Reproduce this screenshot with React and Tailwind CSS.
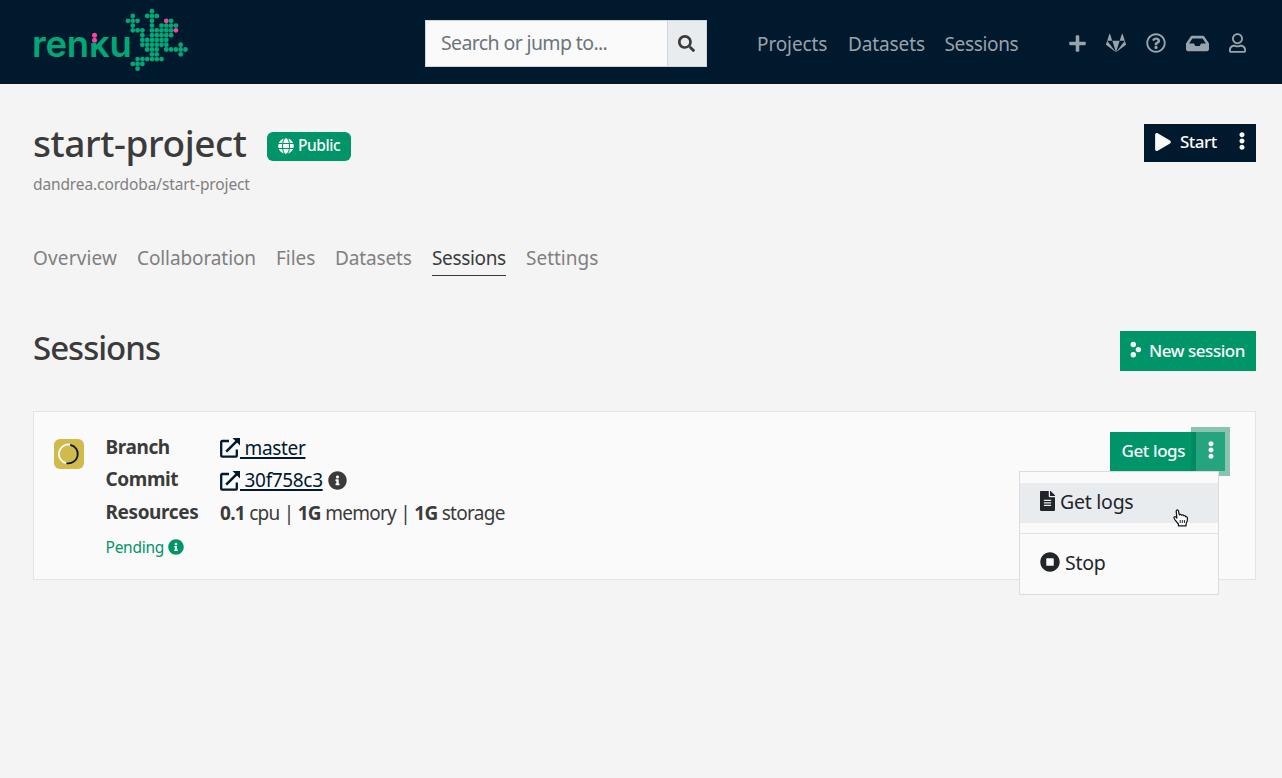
import React from "react";
import {
  FaPlus, FaGitlab, FaRegQuestionCircle, FaInbox, FaRegUser, FaSearch, FaGlobe,
  FaPlay, FaEllipsisV, FaInfoCircle, FaFileAlt, FaStopCircle,
} from "react-icons/fa";

const GECKO = [
  [5], [1, 4, 5, 6], [0, 1, 2, 5, 8, 9], [1, 5, 7, 8, 9, 10], [1, 2, 3, 5, 6, 7, 8, 9, 10],
  [3, 5, 6, 7, 8, 9], [3, 4, 5, 6, 7, 8], [3, 4, 5, 6, 7, 8, 11], [4, 5, 6, 8, 9, 10, 11, 12],
  [5, 6, 11], [2, 3, 4, 5, 6, 7], [1, 2, 3], [2],
];
const isEye = (r, c) => (r === 2 && c === 8) || (r === 4 && c === 10);

function Logo() {
  return (
    <div className="relative h-[84px] w-[157px] shrink-0">
      <div className="absolute left-[-2px] top-[22px] flex whitespace-nowrap font-['Inter',sans-serif] text-[36.5px] font-semibold leading-[44px] tracking-[-0.2px] text-[#00a878]">
        <span className="ml-px">ren</span>
        <span className="[clip-path:polygon(0_21px,9px_21px,9px_15px,100%_15px,100%_100%,0_100%)]">k</span>
        <span>u</span>
      </div>
      <svg className="absolute left-0 top-0" width="157" height="84">
        <circle cx="61.5" cy="35.2" r="2.5" fill="#f04a9c" />
        <circle cx="61.5" cy="40.2" r="2.5" fill="#f04a9c" />
        {GECKO.map((cols, r) =>
          cols.map((c) => (
            <circle key={`${r}-${c}`} cx={95 + c * 4.79} cy={11.2 + r * 4.79} r="2.4" fill={isEye(r, c) ? "#f04a9c" : "#00a878"} />
          ))
        )}
      </svg>
    </div>
  );
}

function ExternalLink() {
  return (
    <svg className="shrink-0" width="20" height="20" viewBox="0 0 20 20" fill="none" stroke="#01192d" strokeWidth="2.3">
      <path d="M9 3H2.2Q1.2 3 1.2 4v13.7q0 1 1 1h13.6q1 0 1-1V11.5" />
      <path d="M6.2 13.6 17 2.8" strokeWidth="2.6" />
      <path d="M12.5 0H20v7.5Z" fill="#01192d" stroke="none" />
    </svg>
  );
}

function Row({ label, children, className }) {
  return (
    <div className={`flex items-center ${className}`}>
      <div className="-mt-[2px] w-[114.5px] shrink-0 text-[19px] font-bold tracking-[-0.4px]">{label}</div>
      {children}
    </div>
  );
}

const TABS = [
  ["Overview", "w-[84px] tracking-[0.15px]"], ["Collaboration", "w-[119px] tracking-[-0.1px]"], ["Files", "w-[39px] tracking-[-0.05px]"],
  ["Datasets", "w-[77px] tracking-[-0.15px]"], ["Sessions", "w-[74px] tracking-[-0.35px]"], ["Settings", "w-[73px]"],
];

export default function App() {
  return (
    <div className="h-[778px] w-[1282px] overflow-hidden bg-[#f4f4f4] font-['Noto_Sans',sans-serif] text-[#3b3b3b]">
      <header className="flex h-[84px] items-center bg-[#01192d] pl-[33px] text-[#99a3ab]">
        <Logo />
        <div className="ml-[235px] mt-[3px] flex h-[47px] w-[282px] border border-[#ced4da] bg-[#fafafa]">
          <div className="flex-1 pl-[15px] text-[19.5px] leading-[44px] tracking-[-0.62px] text-[#6c757d]">Search or jump to...</div>
          <div className="flex w-[39px] items-center justify-center border-l border-[#ced4da] bg-[#e9ecef] pr-px text-[#3b3b3b]"><FaSearch size={17} /></div>
        </div>
        <nav className="ml-[50px] mt-[5px] flex whitespace-nowrap text-[19px] tracking-[-0.12px]">
          <span className="w-[91px]">Projects</span>
          <span className="w-[96.5px]">Datasets</span>
          <span className="w-[123.5px] tracking-[-0.35px]">Sessions</span>
        </nav>
        <div className="mt-[2px] flex items-center">
          <FaPlus size={19} className="mr-[19px]" />
          <FaGitlab size={20} className="mr-[20px]" />
          <FaRegQuestionCircle size={20} className="mr-[20px]" />
          <FaInbox size={23} className="mr-[20px]" />
          <FaRegUser size={20} className="w-[17px]" />
        </div>
      </header>

      <main className="pl-[33px] pr-[26px]">
        <div className="flex h-[89px] justify-between pt-[40px]">
          <div className="flex h-[40px]">
            <h1 className="w-[234px] whitespace-nowrap text-[37px] font-medium leading-[38px] tracking-[-0.42px]">start-project</h1>
            <div className="mt-[8px] flex h-[29px] w-[84px] items-center rounded-md bg-[#009568] pl-[11px] text-[15.5px] font-medium text-[#fafafa]">
              <FaGlobe size={16} className="mr-[4px] -mt-px" />
              <span className="-mt-[2px] tracking-[-0.45px]">Public</span>
            </div>
          </div>
          <div className="flex h-[38px] w-[112px] items-center bg-[#01192d] pl-[10px] text-[#fafafa]">
            <FaPlay size={18} className="mr-[8px] -mt-[3px]" />
            <span className="-mt-[2px] w-[53px] text-[17px] font-medium tracking-[-0.5px]">Start</span>
            <FaEllipsisV size={18} className="-mt-1" />
          </div>
        </div>
        <div className="h-[73px] text-[15.5px] leading-[23px] tracking-[-0.12px] text-[#808080]">dandrea.cordoba/start-project</div>

        <nav className="flex h-[30px] gap-5 whitespace-nowrap text-[19px] leading-[24px] text-[#808080]">
          {TABS.map(([t, w]) => (
            <div key={t} className={`${w} ${t === "Sessions" ? "border-b border-[#3b3b3b] text-[#3b3b3b]" : ""}`}>{t}</div>
          ))}
        </nav>

        <div className="mt-[55px] flex h-[80px] justify-between">
          <h2 className="text-[33px] font-medium leading-[33px] tracking-[-1px]">Sessions</h2>
          <div className="flex h-[40px] w-[136px] items-center bg-[#009568] pl-[10px] text-[#fafafa]">
            <svg width="12" height="18" className="mr-[7px] -mt-[3px]" fill="currentColor"><circle cx="3.3" cy="3.5" r="2.7" /><circle cx="8.4" cy="8.6" r="2.7" /><circle cx="3.3" cy="13.7" r="2.7" /></svg>
            <span className="text-[17px] font-medium tracking-[-0.45px]">New session</span>
          </div>
        </div>

        <section className="relative flex h-[169px] border border-[#e4e4e4] bg-[#fafafa] pl-[20px]">
          <div className="mt-[27px] flex h-[30px] w-[30px] items-center justify-center rounded-md bg-[#d1b94b]">
            <svg width="22" height="22" fill="none" strokeWidth="1.8">
              <path d="M8.5 20.2A9.3 9.3 0 0 1 12 1.7" stroke="#fafafa" />
              <path d="M12.3 1.8A9.3 9.3 0 0 1 8.5 20.2" stroke="#01192d" />
            </svg>
          </div>
          <div className="ml-[21.5px] whitespace-nowrap pt-[20px] text-[19px] tracking-[-0.35px]">
            <Row label="Branch" className="h-[32px]">
              <ExternalLink /><a className="text-[#01192d] underline decoration-[1.5px] underline-offset-2">{"\u00a0master"}</a>
            </Row>
            <Row label="Commit" className="h-[33px]">
              <ExternalLink /><a className="mr-[5.5px] text-[#01192d] underline decoration-[1.5px] underline-offset-2">{"\u00a030f758c3"}</a><FaInfoCircle size={19} />
            </Row>
            <Row label="Resources" className="h-[32px]">
              <span className="tracking-[-0.72px]"><b>0.1</b> cpu | <b>1G</b> memory | <b>1G</b> storage</span>
            </Row>
            <div className="mt-[4px] flex h-[28px] items-center text-[15.5px] tracking-[-0.25px] text-[#009568]"><span className="mt-px">Pending</span><FaInfoCircle size={16} className="ml-[4px]" /></div>
          </div>
          <div className="ml-auto mr-[30px] mt-[20px] flex h-[39px] w-[115px] bg-[#009568] text-[#fafafa]">
            <span className="w-[86px] whitespace-nowrap pl-[11.5px] text-[17px] font-medium leading-[38px] tracking-[-0.4px]">Get logs</span>
            <div className="flex h-[39px] w-[29px] items-center justify-center bg-[#26a47e] shadow-[0_0_0_5px_rgba(0,128,89,0.45)]"><FaEllipsisV size={18} className="-mt-1" /></div>
          </div>
          <div className="absolute left-[985px] top-[59px] h-[124px] w-[200px] border border-[#dadcdd] bg-[#fafafa] pt-[11px] text-[19.5px] tracking-[-0.25px] text-[#212529]">
            <div className="flex h-[40px] items-center bg-[#e9ecef] pl-[20px]"><FaFileAlt size={20} className="mr-[5px] w-[15px] -mt-1" /><span className="-mt-[2px]">Get logs</span></div>
            <div className="mt-[10px] flex h-[61px] items-center border-t border-[#e0e3e5] pl-[20px]"><FaStopCircle size={20} className="mr-[5px] -mt-1" /><span className="-mt-[2px]">Stop</span></div>
          </div>
          <svg className="absolute left-[1139px] top-[97px]" width="16" height="18" viewBox="0 0 16 18" fill="#fff" stroke="#111" strokeWidth="1.2" strokeLinejoin="round">
            <path d="M5.4 16.8V15L2 10.8C.8 9.2.6 8 1.5 7.7c.9-.3 1.7.5 2.4 1.4L3.2 2.5C3.1.5 5.1.4 5.5 2.2l.8 3.6c.6-.8 1.8-.6 2.2.4.7-.7 1.9-.3 2.2.6.8-.5 1.9.1 2 1 .9-.4 1.7.3 1.8 1.2.1 2.6-.5 4.3-1.4 5.8v2Z" />
            <path d="M7.2 11v3M9.3 11v3M11.4 11v3" strokeWidth=".9" />
          </svg>
        </section>
      </main>
    </div>
  );
}
